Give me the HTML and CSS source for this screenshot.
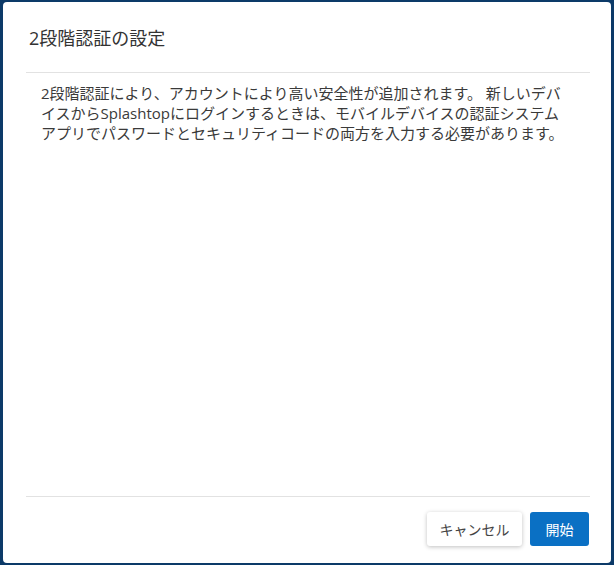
FILE: index.html
```html
<!DOCTYPE html>
<html lang="ja">
<head>
<meta charset="utf-8">
<link rel="stylesheet" href="styles.css">
</head>
<body>
<div class="dialog">
  <div class="header">
    <h1 class="title">2段階認証の設定</h1>
  </div>
  <div class="content">
    <p class="desc">2段階認証により、アカウントにより高い安全性が追加されます。 新しいデバイスからSplashtopにログインするときは、モバイルデバイスの認証システムアプリでパスワードとセキュリティコードの両方を入力する必要があります。</p>
  </div>
  <div class="footer">
    <button class="btn btn-default">キャンセル</button>
    <button class="btn btn-primary">開始</button>
  </div>
</div>
</body>
</html>
```

FILE: styles.css
```css
html, body {
  margin: 0;
  padding: 0;
  height: 100%;
}
body {
  background: #0c3a68;
  font-family: "Open Sans", "Noto Sans CJK JP", sans-serif;
  color: #333333;
  box-sizing: border-box;
  padding: 2px 3px 2px 3px;
}
.dialog {
  height: 100%;
  box-sizing: border-box;
  background: #ffffff;
  border-radius: 4px;
  display: flex;
  flex-direction: column;
  padding: 0 21px 0 23px;
}
.header {
  padding: 24px 0 22px 3px;
  border-bottom: 1px solid #e2e2e2;
}
.title {
  margin: 0;
  font-size: 18px;
  line-height: 24px;
  font-weight: 400;
  color: #333333;
}
.content {
  flex: 1;
  padding: 10px 16px 0 15px;
}
.desc {
  margin: 0;
  font-size: 15px;
  line-height: 20px;
  color: #3a3a3a;
}
.footer {
  border-top: 1px solid #e2e2e2;
  padding: 15px 1px 17px 0;
  display: flex;
  justify-content: flex-end;
  gap: 8px;
}
.btn {
  height: 34px;
  border: none;
  border-radius: 3px;
  font-family: "Open Sans", "Noto Sans CJK JP", sans-serif;
  font-size: 14px;
  padding: 0;
  white-space: nowrap;
  cursor: pointer;
}
.btn-default {
  width: 95px;
  background: #ffffff;
  color: #444444;
  box-shadow: 0 1px 4px rgba(0, 0, 0, 0.25);
}
.btn-primary {
  width: 59px;
  background: #0a70c4;
  color: #ffffff;
}
```
